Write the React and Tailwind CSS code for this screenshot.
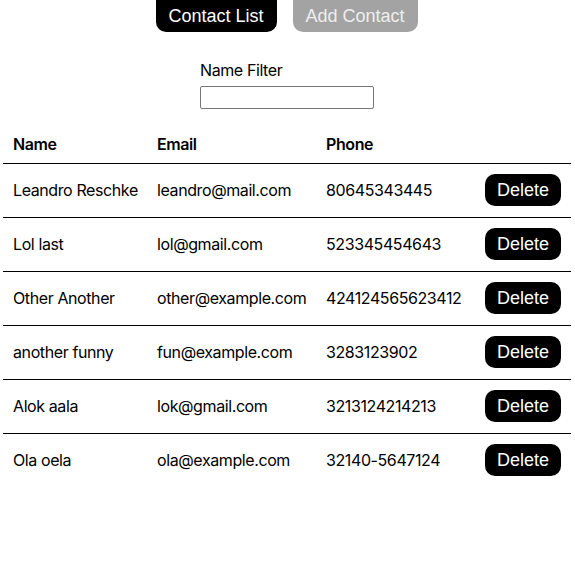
import React, { useState } from 'react';

const initialContacts = [
    { id: 1, name: 'Leandro Reschke', email: 'leandro@mail.com', phone: '80645343445' },
    { id: 2, name: 'Lol last', email: 'lol@gmail.com', phone: '523345454643' },
    { id: 3, name: 'Other Another', email: 'other@example.com', phone: '424124565623412' },
    { id: 4, name: 'another funny', email: 'fun@example.com', phone: '3283123902' },
    { id: 5, name: 'Alok aala', email: 'lok@gmail.com', phone: '3213124214213' },
    { id: 6, name: 'Ola oela', email: 'ola@example.com', phone: '32140-5647124' },
];

export default function App() {
    const [contacts, setContacts] = useState(initialContacts);
    const [filter, setFilter] = useState('');

    const visible = contacts.filter((c) => c.name.toLowerCase().includes(filter.toLowerCase()));

    const handleDelete = (id) => {
        setContacts(contacts.filter((c) => c.id !== id));
    };

    return (
        <div className="min-h-[575px] bg-white text-black font-['Inter',sans-serif] tracking-[-0.025em]">
            <div className="flex justify-center gap-4 pr-[2px] tracking-normal">
                <button className="h-8 w-[121px] rounded-b-[10px] bg-black text-white text-[18px] font-['Liberation_Sans',Arial,sans-serif]">
                    Contact List
                </button>
                <button className="h-8 w-[125px] rounded-b-[10px] bg-[#a3a3a3] text-[#eeeeee] text-[18px] font-['Liberation_Sans',Arial,sans-serif]">
                    Add Contact
                </button>
            </div>

            <div className="ml-[200px] mt-[27px] flex flex-col w-[174px]">
                <label className="text-[16px] leading-[22px]">Name Filter</label>
                <input
                    type="text"
                    value={filter}
                    onChange={(e) => setFilter(e.target.value)}
                    className="mt-[5px] h-[23px] w-[174px] border border-[#767676] rounded-[2px] px-1 text-sm outline-none"
                />
            </div>

            <table className="mt-4 ml-[3px] w-[568px] table-fixed border-collapse text-[16px]">
                <thead>
                    <tr className="border-b border-black">
                        <th className="w-[144px] h-[38px] px-[10px] text-left font-semibold">Name</th>
                        <th className="w-[169px] px-[10px] text-left font-semibold">Email</th>
                        <th className="w-[159px] px-[10px] text-left font-semibold">Phone</th>
                        <th className="w-[96px]"></th>
                    </tr>
                </thead>
                <tbody>
                    {visible.map((c, i) => (
                        <tr key={c.id} className={i < visible.length - 1 ? 'border-b border-black' : ''}>
                            <td className="h-[54px] px-[10px] whitespace-nowrap">{c.name}</td>
                            <td className="px-[10px] whitespace-nowrap">{c.email}</td>
                            <td className="px-[10px] whitespace-nowrap">{c.phone}</td>
                            <td className="px-[10px]">
                                <button
                                    onClick={() => handleDelete(c.id)}
                                    className="w-[76px] h-8 rounded-[10px] bg-black text-white text-[18px] tracking-normal font-['Liberation_Sans',Arial,sans-serif]"
                                >
                                    Delete
                                </button>
                            </td>
                        </tr>
                    ))}
                </tbody>
            </table>
        </div>
    );
}
